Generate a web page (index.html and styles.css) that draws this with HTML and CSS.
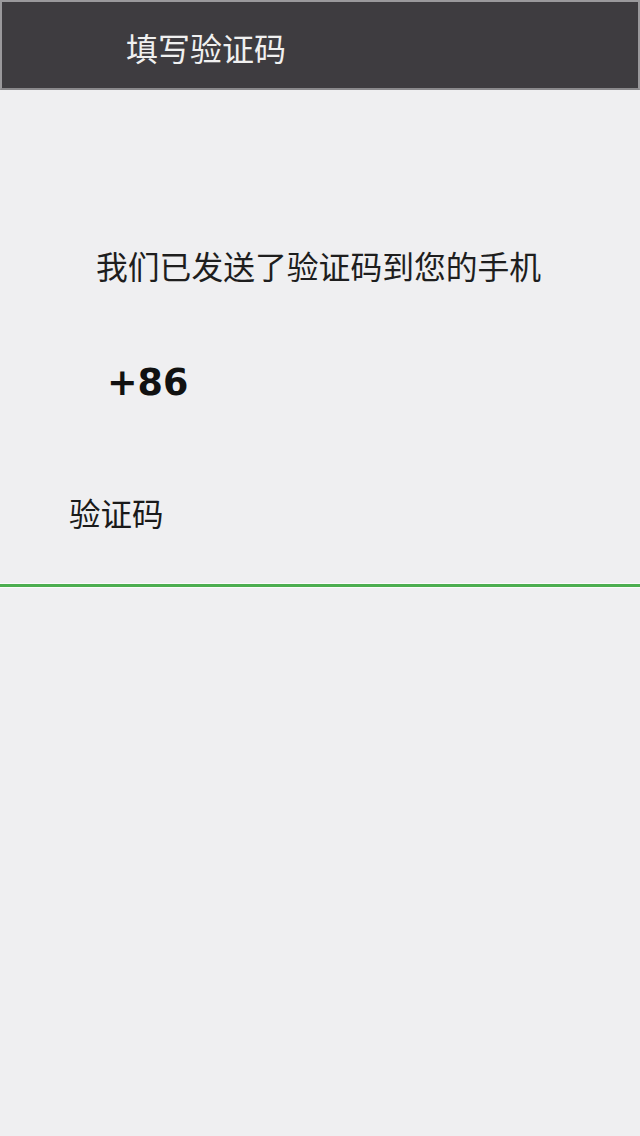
FILE: index.html
```html
<!DOCTYPE html>
<html lang="zh-CN">
<head>
<meta charset="utf-8">
<title>填写验证码</title>
<link rel="stylesheet" href="styles.css">
</head>
<body>
<header class="topbar">
  <h1 class="title">填写验证码</h1>
</header>
<main class="content">
  <p class="notice">我们已发送了验证码到您的手机</p>
  <p class="phone">+86</p>
  <div class="code-field">
    <label class="code-label">验证码</label>
  </div>
  <div class="code-line"></div>
</main>
</body>
</html>
```
FILE: styles.css
```css
html, body {
  margin: 0;
  padding: 0;
}
body {
  width: 640px;
  height: 1136px;
  background: #efeff1;
  font-family: "Noto Sans CJK SC", "DejaVu Sans", sans-serif;
  overflow: hidden;
}
.topbar {
  box-sizing: border-box;
  height: 90px;
  background: #3e3c40;
  border: 2px solid #9a999c;
  border-bottom-color: #8a898c;
  display: flex;
  align-items: center;
  padding-left: 124px;
  padding-top: 3px;
}
.title {
  margin: 0;
  font-size: 32px;
  font-weight: 400;
  color: #f0f0f0;
  line-height: 1;
  letter-spacing: 0;
}
.content {
  display: flex;
  flex-direction: column;
}
.notice {
  margin: 157px 0 0 96px;
  font-size: 31.8px;
  line-height: 36px;
  color: #1e1e1e;
}
.phone {
  margin: 82px 0 0 107px;
  font-family: "DejaVu Sans", sans-serif;
  font-weight: 700;
  font-size: 36.5px;
  line-height: 36px;
  color: #111;
}
.code-field {
  margin: 93px 0 0 69px;
  height: 36px;
}
.code-label {
  font-size: 31.5px;
  line-height: 36px;
  color: #1a1a1a;
}
.code-line {
  margin-top: 53px;
  height: 3px;
  background: #4cae50;
  border-top: 1px solid #fafcfa;
  border-bottom: 1px solid #fafcfa;
}
```
